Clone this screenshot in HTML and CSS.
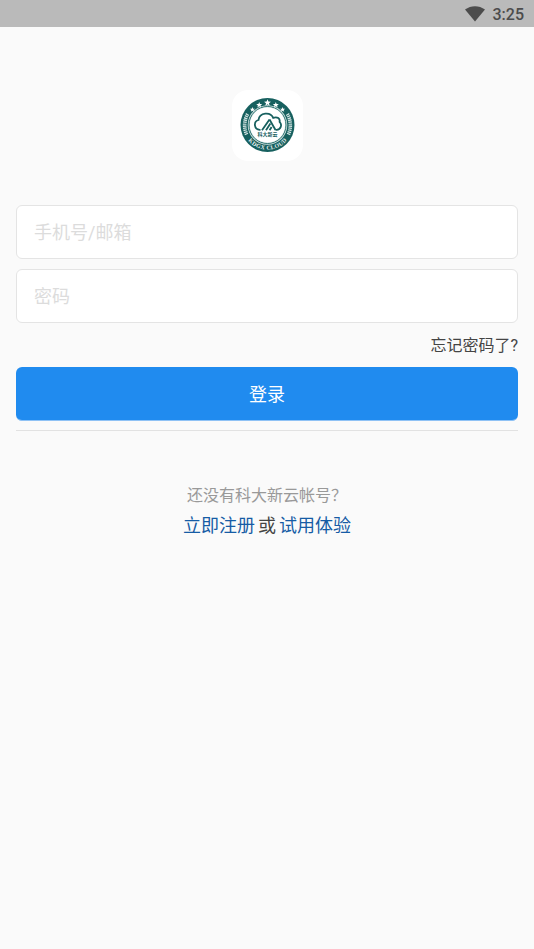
FILE: index.html
```html
<!DOCTYPE html>
<html lang="zh-CN">
<head>
    <meta charset="UTF-8">
    <meta name="viewport" content="width=device-width, initial-scale=1.0">
    <title>登录</title>
    <link rel="stylesheet" href="styles.css">
</head>
<body>
    <header class="status-bar">
        <svg class="wifi" width="20" height="16" viewBox="0 0 20 16">
            <path d="M0 3.6C6 -1 14 -1 20 3.6L10 15.6Z" fill="#4c4c4c"/>
        </svg>
        <span class="time">3:25</span>
    </header>

    <main class="login">
        <div class="logo">
            <svg width="71" height="71" viewBox="0 0 71 71" role="img" aria-label="科大新云">
                <defs>
                    <path id="ring-text" d="M12.7 35A22.8 22.8 0 0 0 58.3 35"/>
                    <path id="star" d="M0 -3L0.8 -1L3 -0.9L1.3 0.5L1.9 2.6L0 1.4L-1.9 2.6L-1.3 0.5L-3 -0.9L-0.8 -1Z"/>
                </defs>
                <circle cx="35.5" cy="35" r="27" fill="#17605f"/>
                <circle cx="35.5" cy="35" r="19.8" fill="#d5e4e3"/>
                <circle cx="35.5" cy="35" r="18.5" fill="none" stroke="#2c7371" stroke-width="1"/>
                <circle cx="35.5" cy="35" r="17.6" fill="#fff"/>
                <g fill="#fff">
                    <use href="#star" transform="translate(35.5 12.7) scale(1.15)"/>
                    <use href="#star" transform="translate(27.2 14.9)"/>
                    <use href="#star" transform="translate(43.8 14.9)"/>
                    <use href="#star" transform="translate(20.4 19.6) scale(.85)"/>
                    <use href="#star" transform="translate(50.6 19.6) scale(.85)"/>
                </g>
                <g fill="none" stroke="#d3e3e2" stroke-width="3.6" stroke-dasharray="1.3 .7">
                    <path d="M15.6 24A23 23 0 0 0 14.6 44.5"/>
                    <path d="M55.4 24A23 23 0 0 1 56.4 44.5"/>
                </g>
                <g fill="none" stroke="#17605f" stroke-width="1.8">
                    <path d="M28.5 39.8H27.8A5 5 0 0 1 26.5 30C27.5 22.3 38.5 21.6 41.2 27.8C45.5 26.2 48.3 28.8 47.6 31.8C50.5 34.8 48.7 39.8 44.7 39.8H43.5"/>
                    <path d="M30 40.3L37.5 29.5M34 40.3L38.4 33.6M37.6 40.3L39.6 37"/>
                    <path d="M37.5 29.5L43.5 40"/>
                </g>
                <text class="logo-name" x="35.5" y="46.4" text-anchor="middle">科大新云</text>
                <text class="logo-ring">
                    <textPath href="#ring-text" startOffset="50%" text-anchor="middle" dominant-baseline="central">KDGX CLOUD</textPath>
                </text>
            </svg>
        </div>

        <form class="login-form">
            <input class="field" type="text" name="account" placeholder="手机号/邮箱" aria-label="手机号/邮箱">
            <input class="field" type="password" name="password" placeholder="密码" aria-label="密码">
            <a class="forgot" href="#">忘记密码了?</a>
            <button class="submit" type="button">登录</button>
        </form>

        <section class="register">
            <p class="hint">还没有科大新云帐号？</p>
            <p class="links"><a href="#">立即注册</a><span>或</span><a href="#">试用体验</a></p>
        </section>
    </main>
</body>
</html>
```
FILE: styles.css
```css
* {
    box-sizing: border-box;
}

body {
    margin: 0;
    min-height: 100vh;
    background: #fafafa;
    color: #444;
    font-family: Roboto, "Noto Sans CJK SC", sans-serif;
    font-size: 18px;
}

a {
    text-decoration: none;
}

.status-bar {
    display: flex;
    justify-content: flex-end;
    align-items: center;
    gap: 8px;
    height: 27px;
    padding: 0 10px;
    background: #bababa;
}

.time {
    color: #4c4c4c;
    font-size: 16px;
    font-weight: 500;
    line-height: 27px;
    padding-top: 2px;
}

.login {
    padding: 63px 16px 0;
}

.logo {
    width: 71px;
    height: 71px;
    margin: 0 auto 44px;
    border-radius: 16px;
    background: #fff;
}

.logo svg {
    display: block;
}

.logo-name {
    fill: #17605f;
    font-size: 5px;
    font-weight: 700;
}

.logo-ring {
    fill: #e4eeee;
    font-family: "Liberation Serif", serif;
    font-size: 6px;
    font-weight: 700;
}

.login-form {
    display: flex;
    flex-direction: column;
    gap: 10px;
    padding-bottom: 9px;
    border-bottom: 1px solid #e2e2e2;
}

.field {
    width: 100%;
    height: 54px;
    padding: 0 17px;
    border: 1px solid #e4e4e4;
    border-radius: 6px;
    outline: none;
    background: #fff;
    color: #444;
    font: inherit;
}

.field::placeholder {
    color: #dcdcdc;
    opacity: 1;
}

.forgot {
    align-self: flex-end;
    padding-top: 2px;
    color: #444;
    font-size: 16px;
    line-height: 22px;
}

.submit {
    height: 54px;
    padding: 0 0 2px;
    border: 0;
    border-bottom: 1px solid #8fc2f5;
    border-radius: 6px;
    background: #208bef;
    color: #fff;
    font: inherit;
    cursor: pointer;
}

.register {
    margin-top: 53px;
    text-align: center;
}

.register p {
    margin: 0;
}

.hint {
    color: #999;
    font-size: 16px;
    line-height: 24px;
}

.register .links {
    display: flex;
    justify-content: center;
    gap: 3px;
    margin-top: 4px;
    line-height: 27px;
}

.links a {
    color: #165ca5;
}
```
